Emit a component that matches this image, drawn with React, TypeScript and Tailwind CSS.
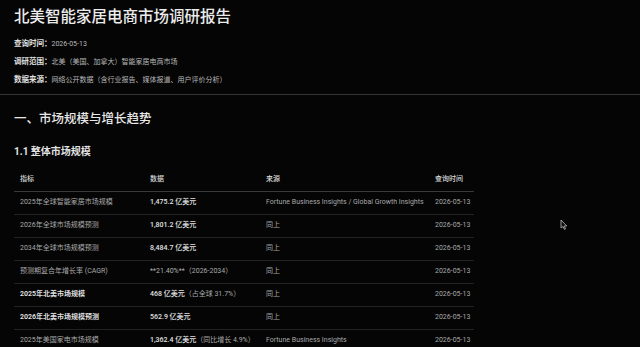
import React from 'react';

const font = { fontFamily: 'Roboto, "Noto Sans CJK SC", "Noto Sans", sans-serif' };

type Row = {
  name: string;
  nameBold?: boolean;
  value: string;
  note?: string;
  valueBold?: boolean;
  source: string;
  date: string;
};

const rows: Row[] = [
  { name: '2025年全球智能家居市场规模', value: '1,475.2 亿美元', valueBold: true, source: 'Fortune Business Insights / Global Growth Insights', date: '2026-05-13' },
  { name: '2026年全球市场规模预测', value: '1,801.2 亿美元', valueBold: true, source: '同上', date: '2026-05-13' },
  { name: '2034年全球市场规模预测', value: '8,484.7 亿美元', valueBold: true, source: '同上', date: '2026-05-13' },
  { name: '预测期复合年增长率 (CAGR)', value: '**21.40%**', note: '（2026-2034）', source: '同上', date: '2026-05-13' },
  { name: '2025年北美市场规模', nameBold: true, value: '468 亿美元', note: '（占全球 31.7%）', valueBold: true, source: '同上', date: '2026-05-13' },
  { name: '2026年北美市场规模预测', nameBold: true, value: '562.9 亿美元', valueBold: true, source: '同上', date: '2026-05-13' },
  { name: '2025年美国家电市场规模', value: '1,362.4 亿美元', note: '（同比增长 4.9%）', valueBold: true, source: 'Fortune Business Insights', date: '2026-05-13' },
];

export default function App() {
  return (
    <div className="relative min-h-[347px] w-[640px] overflow-hidden bg-[#050505] text-[#d6d6d6]" style={font}>
      <div className="px-[14px] pt-[6px]">
        <h1 className="text-[15.5px] font-medium leading-[22px] text-[#ececec]">北美智能家居电商市场调研报告</h1>

        <div className="mt-[11px] flex flex-col gap-[8px] text-[7px] leading-[10px]">
          <p><span className="text-[7.5px] font-bold text-[#e0e0e0]">查询时间：</span><span className="text-[#b8b8b8]">2026-05-13</span></p>
          <p><span className="text-[7.5px] font-bold text-[#e0e0e0]">调研范围：</span><span className="text-[#b8b8b8]">北美（美国、加拿大）智能家居电商市场</span></p>
          <p><span className="text-[7.5px] font-bold text-[#e0e0e0]">数据来源：</span><span className="text-[#b8b8b8]">网络公开数据（含行业报告、媒体报道、用户评价分析）</span></p>
        </div>
      </div>

      <div className="mt-[9px] h-px w-full bg-[#333]" />

      <div className="px-[14px]">
        <h2 className="mt-[15px] text-[12.5px] font-medium leading-[18px] text-[#e8e8e8]">一、市场规模与增长趋势</h2>
        <h3 className="mt-[17px] text-[10px] font-bold leading-[14px] text-[#e2e2e2]">1.1 整体市场规模</h3>

        <table className="mt-[9px] w-[460px] border-collapse text-left text-[7px] leading-[9px]">
          <thead>
            <tr className="h-[23px] border-b border-[#3a3a3a]">
              <th className="w-[130px] pl-[6px] font-medium text-[#dcdcdc]">指标</th>
              <th className="w-[116px] pl-[6px] font-medium text-[#dcdcdc]">数据</th>
              <th className="w-[169px] pl-[6px] font-medium text-[#dcdcdc]">来源</th>
              <th className="pl-[6px] font-medium text-[#dcdcdc]">查询时间</th>
            </tr>
          </thead>
          <tbody>
            {rows.map((r) => (
              <tr key={r.name} className="h-[23px] border-b border-[#222]">
                <td className={r.nameBold ? 'pl-[6px] font-bold text-[#dedede]' : 'pl-[6px] text-[#a8a8a8]'}>{r.name}</td>
                <td className="pl-[6px]">
                  <span className={r.valueBold ? 'font-medium text-[#e2e2e2]' : 'text-[#b0b0b0]'}>{r.value}</span>
                  {r.note && <span className="text-[#a8a8a8]">{r.note}</span>}
                </td>
                <td className="pl-[6px] text-[#a8a8a8]">{r.source}</td>
                <td className="pl-[6px] text-[#a8a8a8]">{r.date}</td>
              </tr>
            ))}
          </tbody>
        </table>
      </div>

      {/* mouse pointer left in the capture */}
      <svg className="absolute left-[560px] top-[219px]" width="8" height="12" viewBox="0 0 8 12">
        <path d="M1 1 L1 9 L3 7.5 L4.5 10.5 L5.5 10 L4.2 7 L6.8 7 Z" fill="#111" stroke="#bbb" strokeWidth="0.8" strokeLinejoin="round" />
      </svg>
    </div>
  );
}
